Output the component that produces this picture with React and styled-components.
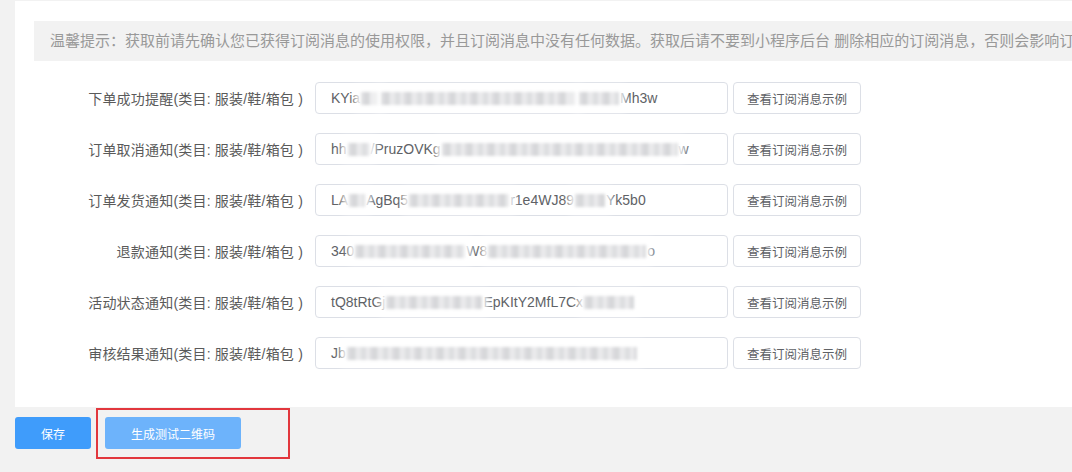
import React from 'react'
import styled, { createGlobalStyle } from 'styled-components'

const GlobalStyle = createGlobalStyle`
  html, body {
    margin: 0;
    padding: 0;
    background: #f2f2f2;
    overflow: hidden;
  }
  body {
    font-family: "Liberation Sans", "Noto Sans CJK SC", sans-serif;
  }
`

const Page = styled.div`
  width: 1072px;
  height: 472px;
  padding: 1px 0 0 15px;
  box-sizing: border-box;
  overflow: hidden;
`

const Panel = styled.div`
  width: 1200px;
  background: #fff;
  padding: 20px 0 38px 19px;
  box-sizing: border-box;
`

// the tip runs past the right edge in the original, so it is clipped on purpose
const Notice = styled.div`
  height: 40px;
  line-height: 40px;
  background: #f2f2f2;
  color: #999;
  font-size: 15px;
  padding-left: 16px;
  white-space: nowrap;
  overflow: hidden;
  margin-bottom: 21px;
`

const FormList = styled.div`
  display: flex;
  flex-direction: column;
  gap: 19px;
`

const Row = styled.div`
  display: grid;
  grid-template-columns: 281px 413px 133px;
  align-items: center;
  height: 32px;
`

const Label = styled.div`
  text-align: right;
  font-size: 14px;
  color: #5a5a5a;
  padding-right: 12px;
  white-space: nowrap;
  letter-spacing: 0.2px;
`

const InputBox = styled.div`
  height: 32px;
  border: 1px solid #dcdfe6;
  border-radius: 4px;
  box-sizing: border-box;
  padding: 0 15px;
  display: flex;
  align-items: center;
  font-size: 14px;
  color: #606266;
  white-space: nowrap;
`

// mosaic that hides the secret part of each template id
const Blur = styled.span`
  display: inline-block;
  width: ${p => p.$w}px;
  height: 13px;
  margin: 0 1px;
  background: repeating-linear-gradient(
    90deg,
    #e4e4e6 0px,
    #d2d3d6 6px,
    #eeeeef 11px,
    #d9dadd 17px,
    #f3f3f4 22px
  );
  filter: blur(1.5px);
  box-shadow: 0 0 6px 6px rgba(255, 255, 255, 0.9);
`

const ExampleButton = styled.button`
  margin-left: 5px;
  height: 32px;
  border: 1px solid #dcdfe6;
  border-radius: 4px;
  background: #fff;
  color: #606266;
  font-family: inherit;
  font-size: 12.5px;
  padding: 0;
  cursor: pointer;
`

const Footer = styled.div`
  position: relative;
  display: flex;
  gap: 14px;
  padding-top: 10px;
`

const Button = styled.button`
  height: 32px;
  width: ${p => p.$w}px;
  border: none;
  border-radius: 3px;
  background: ${p => (p.$light ? '#6db3fb' : '#3f9cfb')};
  color: #fff;
  font-family: inherit;
  font-size: 12px;
  padding: 0;
`

const Highlight = styled.div`
  position: absolute;
  left: 81px;
  top: 1px;
  width: 194px;
  height: 51px;
  border: 2px solid #e2373d;
  box-sizing: border-box;
  pointer-events: none;
`

const rows = [
  { name: '下单成功提醒', parts: ['KYia', 18, '', 196, '', 40, 'Mh3w'] },
  { name: '订单取消通知', parts: ['hh', 22, '/PruzOVKg', 236, 'w'] },
  { name: '订单发货通知', parts: ['LA', 16, 'AgBq5', 100, 'r1e4WJ89', 30, 'Yk5b0'] },
  { name: '退款通知', parts: ['340', 110, 'W8', 158, 'o'] },
  { name: '活动状态通知', parts: ['tQ8tRtGj', 96, 'EpKItY2MfL7Cx', 50] },
  { name: '审核结果通知', parts: ['Jb', 290] },
]

export default function App() {
  return (
    <Page>
      <GlobalStyle />
      <Panel>
        <Notice>
          温馨提示：获取前请先确认您已获得订阅消息的使用权限，并且订阅消息中没有任何数据。获取后请不要到小程序后台 删除相应的订阅消息，否则会影响订阅消息正常使用
        </Notice>
        <FormList>
          {rows.map(row => (
            <Row key={row.name}>
              <Label>{row.name}(类目: 服装/鞋/箱包 )</Label>
              <InputBox>
                {row.parts.map((p, i) =>
                  typeof p === 'number' ? <Blur key={i} $w={p} /> : <span key={i}>{p}</span>
                )}
              </InputBox>
              <ExampleButton>查看订阅消息示例</ExampleButton>
            </Row>
          ))}
        </FormList>
      </Panel>
      <Footer>
        <Button $w={76}>保存</Button>
        <Button $w={136} $light>生成测试二维码</Button>
        <Highlight />
      </Footer>
    </Page>
  )
}
